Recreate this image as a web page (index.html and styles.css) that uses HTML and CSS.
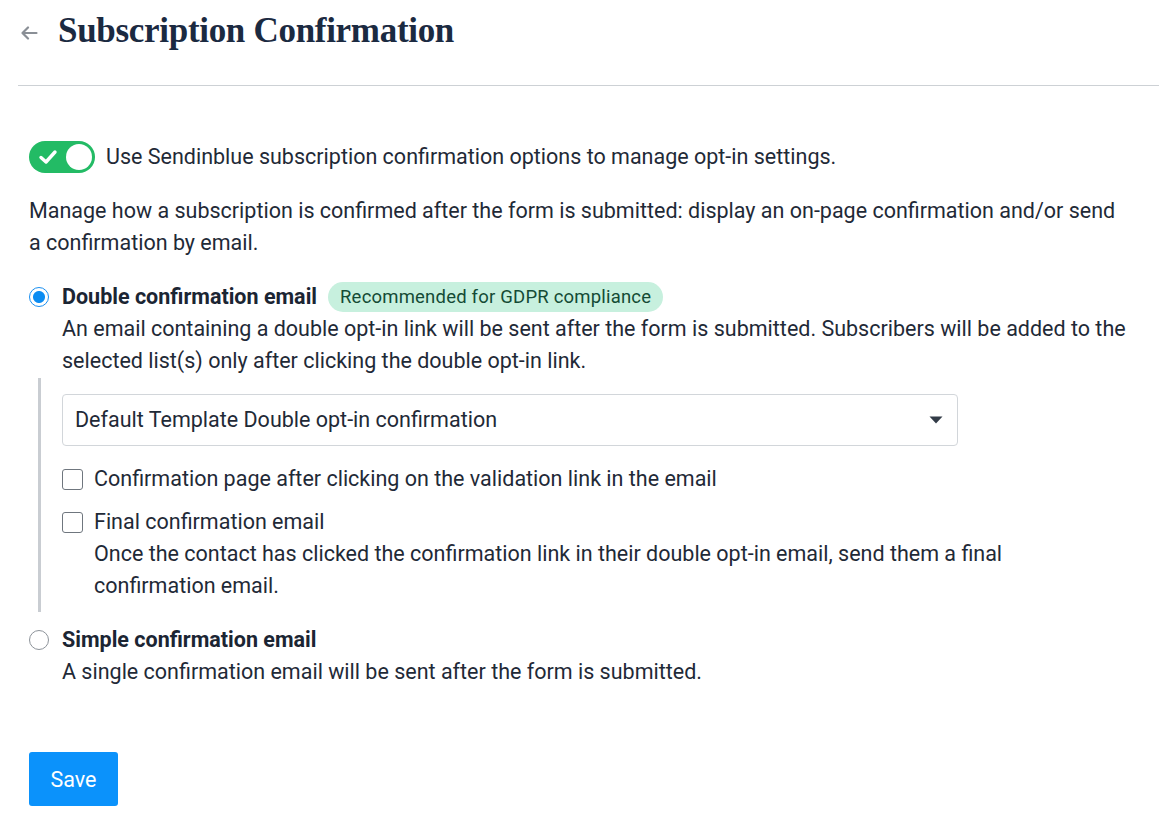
FILE: index.html
```html
<!DOCTYPE html>
<html lang="en">
<head>
<meta charset="utf-8">
<link rel="stylesheet" href="styles.css">
</head>
<body>
<header class="header">
  <svg class="back" width="18" height="14" viewBox="0 0 18 14"><path d="M8 1.5 L2.5 7 L8 12.5 M2.5 7 H16.5" fill="none" stroke="#8a8f96" stroke-width="2.2" stroke-linecap="round" stroke-linejoin="round"/></svg>
  <h1 class="title">Subscription Confirmation</h1>
</header>
<main class="content">
  <div class="toggle-row">
    <span class="toggle">
      <svg class="toggle-check" width="20" height="16" viewBox="0 0 20 16"><path d="M3 8.5 L8 13 L17 3" fill="none" stroke="#fff" stroke-width="3.4" stroke-linecap="round" stroke-linejoin="round"/></svg>
      <span class="knob"></span>
    </span>
    <span>Use Sendinblue subscription confirmation options to manage opt-in settings.</span>
  </div>
  <p class="intro">Manage how a subscription is confirmed after the form is submitted: display an on-page confirmation and/or send a confirmation by email.</p>

  <div class="option">
    <span class="radio checked"></span>
    <div class="option-body">
      <div class="option-head"><strong>Double confirmation email</strong><span class="badge">Recommended for GDPR compliance</span></div>
      <p class="desc">An email containing a double opt-in link will be sent after the form is submitted. Subscribers will be added to the selected list(s) only after clicking the double opt-in link.</p>
    </div>
  </div>
  <div class="sub">
    <div class="sub-inner">
      <div class="select"><span>Default Template Double opt-in confirmation</span><svg width="14" height="8" viewBox="0 0 14 8"><path d="M0.5 0.5 H13.5 L7 7.5 Z" fill="#323b47"/></svg></div>
      <div class="check-row">
        <span class="checkbox"></span>
        <div><div>Confirmation page after clicking on the validation link in the email</div></div>
      </div>
      <div class="check-row second">
        <span class="checkbox"></span>
        <div>
          <div>Final confirmation email</div>
          <p class="desc">Once the contact has clicked the confirmation link in their double opt-in email, send them a final confirmation email.</p>
        </div>
      </div>
    </div>
  </div>

  <div class="option second-option">
    <span class="radio"></span>
    <div class="option-body">
      <div class="option-head"><strong>Simple confirmation email</strong></div>
      <p class="desc">A single confirmation email will be sent after the form is submitted.</p>
    </div>
  </div>

  <button class="save">Save</button>
</main>
</body>
</html>
```

FILE: styles.css
```css
* { box-sizing: border-box; }
body {
  margin: 0;
  background: #fff;
  font-family: Roboto, "Liberation Sans", sans-serif;
  font-size: 21.5px;
  line-height: 32px;
  color: #1f2a37;
}
p { margin: 0; }
.header {
  height: 86px;
  margin-left: 18px;
  border-bottom: 1px solid #cdd1d5;
  display: flex;
  align-items: flex-start;
  padding-top: 9px;
  padding-left: 2px;
}
.back { margin-top: 17px; margin-right: 20px; }
.title {
  margin: 0;
  font-family: "Liberation Serif", "DejaVu Serif", serif;
  font-weight: 700;
  font-size: 35px;
  line-height: 44px;
  letter-spacing: -0.3px;
  color: #1b2a41;
}
.content { padding: 55px 29px 0 29px; }
.toggle-row { display: flex; align-items: center; gap: 11px; }
.toggle {
  width: 66px; height: 32px;
  border-radius: 16px;
  background: #23bb65;
  display: flex; align-items: center;
  justify-content: space-between;
  padding: 0 3px 0 9px;
  flex: none;
}
.knob {
  width: 26px; height: 26px;
  border-radius: 50%;
  background: #fff;
}
.intro { margin-top: 22px; line-height: 31.5px; }
.option { display: flex; gap: 13px; margin-top: 23px; }
.radio {
  flex: none;
  width: 20px; height: 20px;
  margin-top: 6px;
  border-radius: 50%;
  border: 1.5px solid #8d939a;
  background: #fff;
}
.radio.checked {
  border-color: #1a8ff0;
  background: radial-gradient(circle, #0b8cf2 0 5.5px, #fff 6.5px);
}
.option-head { display: flex; align-items: center; }
.option-head strong { font-weight: 700; color: #1b2533; }
.badge {
  margin-left: 11px;
  height: 30px;
  line-height: 30px;
  padding: 0 12px;
  border-radius: 15px;
  background: #c7f0de;
  color: #144b35;
  font-size: 18.5px;
  letter-spacing: 0.2px;
}
.sub {
  margin-top: 1px;
  margin-left: 9px;
  border-left: 3px solid #c9cdd2;
  padding: 16px 0 10px 21px;
}
.sub-inner { width: 950px; }
.select {
  width: 896px; height: 52px;
  border: 1px solid #d2d6da;
  border-radius: 4px;
  display: flex; align-items: center; justify-content: space-between;
  padding: 0 14px 0 12px;
}
.check-row { display: flex; gap: 11px; margin-top: 17px; }
.check-row.second { margin-top: 11px; }
.checkbox {
  flex: none;
  width: 21px; height: 21px;
  margin-top: 6px;
  border: 1.5px solid #6f767e;
  border-radius: 3px;
}
.second-option { margin-top: 12px; }
.save {
  margin-top: 64px;
  width: 89px; height: 54px;
  border: none;
  border-radius: 3px;
  background: #0b92fb;
  color: #fff;
  font-family: Roboto, "Liberation Sans", sans-serif;
  font-size: 21.5px;
}
```
